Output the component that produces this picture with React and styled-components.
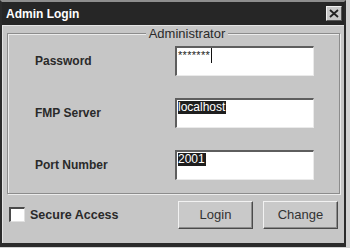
import { Fragment } from "react";
import styled, { createGlobalStyle } from "styled-components";

const GlobalStyle = createGlobalStyle`
  html, body {
    margin: 0;
    padding: 0;
    background: #d2d2d2;
  }
  body {
    font-family: "Liberation Sans", Arial, sans-serif;
  }
`;

const Window = styled.div`
  box-sizing: border-box;
  width: 346px;
  height: 247px;
  background: #c6c6c6;
  border: 2px solid #2b2b2b;
  border-top-color: #8e8e8e;
  border-bottom-width: 4px;
  display: flex;
  flex-direction: column;
`;

const TitleBar = styled.div`
  height: 23px;
  background: #262626;
  display: flex;
  align-items: center;
  padding: 0 2px 0 4px;

  .title {
    color: #fff;
    font-size: 12px;
    font-weight: bold;
    flex: 1;
  }
`;

const CloseButton = styled.div`
  box-sizing: border-box;
  width: 16px;
  height: 15px;
  background: #c8c8c8;
  border: 1px solid;
  border-color: #f0f0f0 #555 #555 #f0f0f0;
  display: flex;
  align-items: center;
  justify-content: center;
`;

const Body = styled.div`
  flex: 1;
  display: flex;
  flex-direction: column;
  border-top: 1px solid #e4e4e4;
  border-left: 1px solid #e4e4e4;
`;

const Group = styled.fieldset`
  box-sizing: border-box;
  height: 168px;
  margin: 0 4px 0 4px;
  padding: 5px 0 0 27px;
  border: 1px solid #8c8c8c;
  box-shadow: inset 1px 1px 0 #ececec, 1px 1px 0 #ececec;
  display: grid;
  grid-template-columns: 140px 139px;
  grid-template-rows: repeat(3, 30px);
  row-gap: 22px;
  align-items: center;
  align-content: start;

  legend {
    margin: 0 auto;
    padding: 0 3px;
    background: #c6c6c6;
    font-size: 13px;
    line-height: 15px;
    color: #2a2a2a;
  }
`;

const Label = styled.div`
  font-size: 12px;
  font-weight: bold;
  color: #2a2a2a;
`;

const Field = styled.div`
  box-sizing: border-box;
  height: 30px;
  background: #fff;
  border-top: 2px solid #5e5e5e;
  border-left: 2px solid #5e5e5e;
  border-right: 1px solid #eaeaea;
  border-bottom: 1px solid #eaeaea;
  padding: 0 1px;
  font-size: 12px;
  line-height: 13px;
  color: #222;
`;

const Selected = styled.span`
  display: inline-block;
  background: #1e1e1e;
  color: #fff;
  padding: 0 1px 0 0;
  margin-top: 1px;
`;

const Masked = styled.span`
  display: inline-block;
  margin-top: 1px;
  font-size: 11px;
  letter-spacing: 0.3px;
`;

const Caret = styled.span`
  display: inline-block;
  width: 1px;
  height: 15px;
  background: #111;
  vertical-align: top;
  margin-left: 1px;
`;

const Footer = styled.div`
  flex: 1;
  display: flex;
  align-items: center;
  padding: 0 6px 8px 6px;
`;

const Check = styled.div`
  box-sizing: border-box;
  width: 16px;
  height: 15px;
  background: #fff;
  border-top: 2px solid #4a4a4a;
  border-left: 2px solid #4a4a4a;
  border-right: 1px solid #e0e0e0;
  border-bottom: 1px solid #e0e0e0;
`;

const CheckLabel = styled.span`
  margin-left: 5px;
  font-size: 12.5px;
  font-weight: bold;
  color: #2a2a2a;
  flex: 1;
`;

const Button = styled.button`
  box-sizing: border-box;
  width: 75px;
  height: 28px;
  margin-left: ${(p) => (p.$gap ? "10px" : "0")};
  padding: 0;
  background: #c9c9c9;
  border: 1px solid;
  border-color: #f2f2f2 #4a4a4a #4a4a4a #f2f2f2;
  box-shadow: inset -1px -1px 0 #8c8c8c;
  font-family: "Liberation Sans", Arial, sans-serif;
  font-size: 13px;
  color: #333;
`;

const fields = [
  { label: "Password", password: true },
  { label: "FMP Server", value: "localhost" },
  { label: "Port Number", value: "2001" },
];

export default function App() {
  return (
    <>
      <GlobalStyle />
      <Window>
        <TitleBar>
          <span className="title">Admin Login</span>
          <CloseButton>
            <svg width="10" height="9" viewBox="0 0 10 9">
              <path d="M1 1 L9 8 M9 1 L1 8" stroke="#222" strokeWidth="1.8" />
            </svg>
          </CloseButton>
        </TitleBar>
        <Body>
          <Group>
            <legend>Administrator</legend>
            {fields.map((f) => (
              <Fragment key={f.label}>
                <Label>{f.label}</Label>
                <Field>
                  {f.password ? (
                    <>
                      <Masked>*******</Masked>
                      <Caret />
                    </>
                  ) : (
                    <Selected>{f.value}</Selected>
                  )}
                </Field>
              </Fragment>
            ))}
          </Group>
          <Footer>
            <Check />
            <CheckLabel>Secure Access</CheckLabel>
            <Button>Login</Button>
            <Button $gap>Change</Button>
          </Footer>
        </Body>
      </Window>
    </>
  );
}
